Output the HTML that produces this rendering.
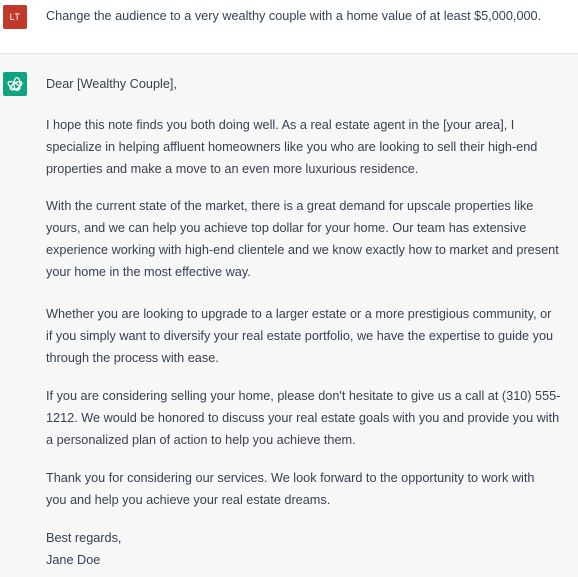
<!DOCTYPE html>
<html><head><style>
body{margin:0;width:578px;height:577px;overflow:hidden;font-family:"Liberation Sans",sans-serif;font-size:12.7px;color:#374151;background:#f7f7f8;position:relative}
.top{position:absolute;left:0;top:0;width:578px;height:53px;background:#fff;border-bottom:1px solid #e3e3e6}
.av{position:absolute;left:3px;width:24px;height:24px;border-radius:2px}
.lt{top:5px;background:#c0392b;color:#fff;font-size:9px;line-height:24px;text-align:center;letter-spacing:.5px}
.gpt{top:72px;background:#10a37f}
.t{position:absolute;left:46px;width:530px;white-space:nowrap;line-height:22px}
</style></head><body>
<div class="top"><div class="av lt">LT</div><div class="t" style="top:5px">Change the audience to a very wealthy couple with a home value of at least $5,000,000.</div></div>
<div class="av gpt"><svg width="24" height="24" viewBox="0 0 24 24" fill="none" stroke="#fff" stroke-width="1.3"><g transform="translate(12 12)"><ellipse rx="3" ry="6.5" transform="rotate(0) translate(2 0)"/><ellipse rx="3" ry="6.5" transform="rotate(60) translate(2 0)"/><ellipse rx="3" ry="6.5" transform="rotate(120) translate(2 0)"/></g></svg></div>
<div class="t" style="top:73px">Dear [Wealthy Couple],</div>
<div class="t" style="top:114px">I hope this note finds you both doing well. As a real estate agent in the [your area], I<br>specialize in helping affluent homeowners like you who are looking to sell their high-end<br>properties and make a move to an even more luxurious residence.</div>
<div class="t" style="top:195px">With the current state of the market, there is a great demand for upscale properties like<br>yours, and we can help you achieve top dollar for your home. Our team has extensive<br>experience working with high-end clientele and we know exactly how to market and present<br>your home in the most effective way.</div>
<div class="t" style="top:303px">Whether you are looking to upgrade to a larger estate or a more prestigious community, or<br>if you simply want to diversify your real estate portfolio, we have the expertise to guide you<br>through the process with ease.</div>
<div class="t" style="top:385px">If you are considering selling your home, please don't hesitate to give us a call at (310) 555-<br>1212. We would be honored to discuss your real estate goals with you and provide you with<br>a personalized plan of action to help you achieve them.</div>
<div class="t" style="top:467px">Thank you for considering our services. We look forward to the opportunity to work with<br>you and help you achieve your real estate dreams.</div>
<div class="t" style="top:527px">Best regards,<br>Jane Doe</div>
</body></html>
